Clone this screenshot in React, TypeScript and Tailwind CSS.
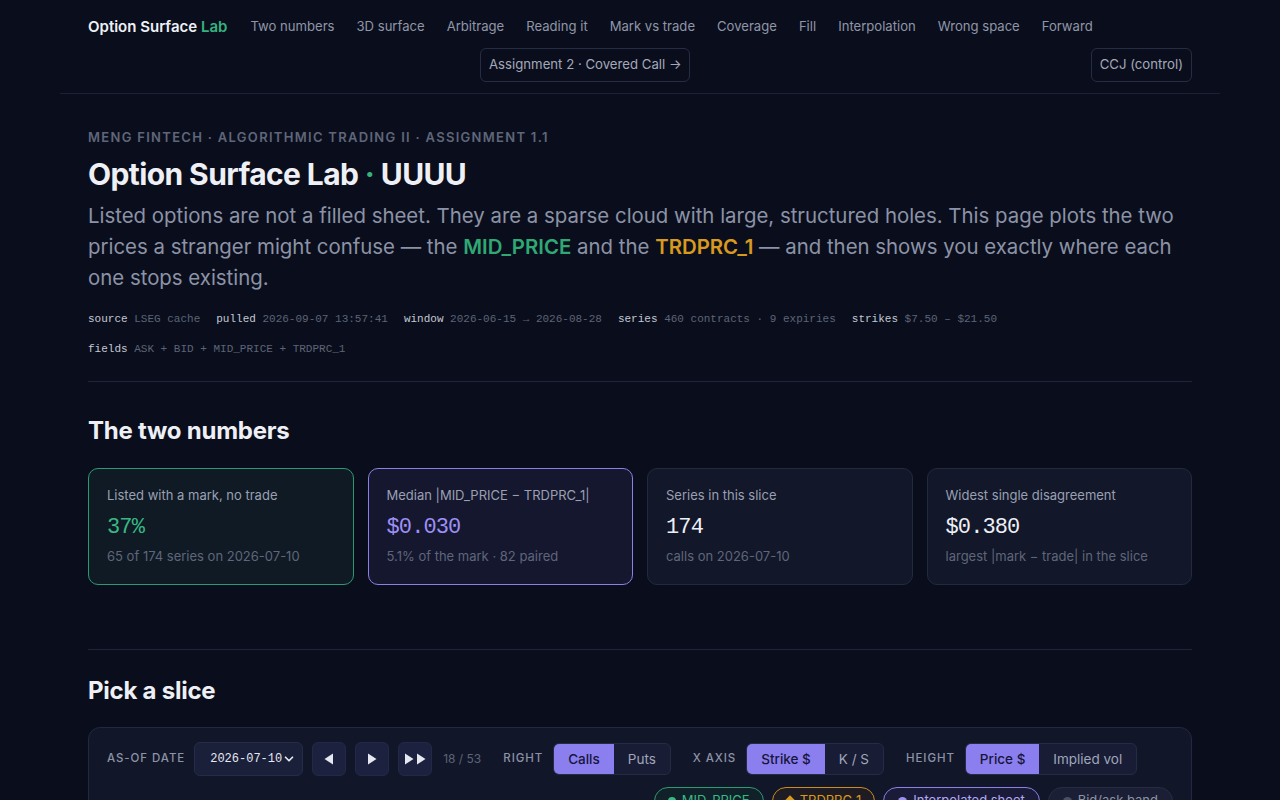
import { ChevronDown } from 'lucide-react'

const nav = [
  'Two numbers',
  '3D surface',
  'Arbitrage',
  'Reading it',
  'Mark vs trade',
  'Coverage',
  'Fill',
  'Interpolation',
  'Wrong space',
  'Forward',
]

const meta: [string, string][] = [
  ['source', 'LSEG cache'],
  ['pulled', '2026-09-07 13:57:41'],
  ['window', '2026-06-15 → 2026-08-28'],
  ['series', '460 contracts · 9 expiries'],
  ['strikes', '$7.50 – $21.50'],
]

const mono = { fontFamily: '"Liberation Mono", "DejaVu Sans Mono", monospace' }

function Header() {
  return (
    <header className="border-b border-[#1c2236] px-7 pt-[16px] pb-[11px]">
      <div className="flex items-center gap-[23px] whitespace-nowrap">
        <a className="text-[15px] font-semibold text-[#eef0f6]">
          Option Surface <span className="text-[#34b37f]">Lab</span>
        </a>
        <nav className="flex items-center gap-[22px] text-[13.1px] text-[#8f96a8]">
          {nav.map((n) => (
            <a key={n}>{n}</a>
          ))}
        </nav>
      </div>
      <div className="mt-[9px] flex items-center whitespace-nowrap">
        <a className="ml-[392px] flex h-[34px] items-center rounded-md border border-[#262c42] px-2 text-[13.2px] text-[#a3a9ba]">
          Assignment 2 · Covered Call →
        </a>
        <a className="ml-auto flex h-[34px] items-center rounded-md border border-[#262c42] px-2 text-[13.2px] text-[#a3a9ba]">
          CCJ (control)
        </a>
      </div>
    </header>
  )
}

function Card({
  label,
  value,
  sub,
  tone,
}: {
  label: React.ReactNode
  value: string
  sub: React.ReactNode
  tone: 'green' | 'purple' | 'plain'
}) {
  const box =
    tone === 'green'
      ? 'border-[#2c9a71] bg-[#0f1a25]'
      : tone === 'purple'
        ? 'border-[#8a80e6] bg-[#15172f]'
        : 'border-[#232a3e] bg-[#121729]'
  const val =
    tone === 'green' ? 'text-[#38b883]' : tone === 'purple' ? 'text-[#9d90f5]' : 'text-[#eef0f6]'
  return (
    <div className={`h-[117px] rounded-[10px] border px-[18px] pt-[17px] ${box}`}>
      <div className="text-[13px] leading-[18px] text-[#9aa0b2]">{label}</div>
      <div className={`mt-[10px] text-[22px] leading-[28px] tracking-[-0.04em] ${val}`} style={mono}>
        {value}
      </div>
      <div className="mt-[5px] text-[13px] leading-[18px] text-[#5f667a]">{sub}</div>
    </div>
  )
}

function Seg({ items }: { items: string[] }) {
  return (
    <div className="flex h-[32px] shrink-0 overflow-hidden rounded-md border border-[#252b44] bg-[#181d35] text-[13.5px] whitespace-nowrap">
      {items.map((it, i) => (
        <button
          key={it}
          className={
            i === 0
              ? 'bg-[#8b7ff0] px-[14px] font-medium text-[#17153a]'
              : 'px-[14px] text-[#a0a6ba]'
          }
        >
          {it}
        </button>
      ))}
    </div>
  )
}

function Label({ children }: { children: string }) {
  return (
    <span className="shrink-0 text-[11.5px] font-medium tracking-[0.08em] whitespace-nowrap text-[#8c93a6] uppercase">
      {children}
    </span>
  )
}

function StepBtn({ children }: { children: React.ReactNode }) {
  return (
    <button className="flex h-[34px] w-[34px] shrink-0 items-center justify-center rounded-md border border-[#232944] bg-[#1c2140] text-[#e6e8f0]">
      {children}
    </button>
  )
}

function Tri({ dir }: { dir: 'l' | 'r' }) {
  return (
    <svg width="10" height="12" viewBox="0 0 10 12">
      {dir === 'r' ? (
        <path d="M1 0.5 L9.5 6 L1 11.5 Z" fill="currentColor" />
      ) : (
        <path d="M9 0.5 L0.5 6 L9 11.5 Z" fill="currentColor" />
      )}
    </svg>
  )
}

export default function App() {
  return (
    <div className="min-h-screen bg-[#0a0e1c]" style={{ fontFamily: 'Inter, "Noto Sans", sans-serif' }}>
      <div className="mx-auto w-[1160px]">
        <Header />
        <main className="px-7">
          <section className="border-b border-[#1f2538] pt-[34px] pb-[17px]">
            <p className="text-[13px] font-semibold tracking-[0.1em] text-[#5f667a] uppercase">
              MEng Fintech · Algorithmic Trading II · Assignment 1.1
            </p>
            <h1 className="mt-[8px] text-[30px] leading-[38px] font-bold tracking-[-0.02em] text-[#eef0f6]">
              Option Surface Lab <span className="text-[#34b37f]">·</span> UUUU
            </h1>
            <p className="mt-[7px] text-[20.4px] leading-[31px] text-[#8c93a6]">
              Listed options are not a filled sheet. They are a sparse cloud with large, structured holes. This page
              plots the two prices a stranger might confuse — the{' '}
              <span className="font-semibold text-[#2fa874]">MID_PRICE</span> and the{' '}
              <span className="font-semibold text-[#d89a1e]">TRDPRC_1</span> — and then shows you exactly where each
              one stops existing.
            </p>
            <div className="mt-[11px] flex gap-[16px] text-[11px] leading-[30px] whitespace-nowrap" style={mono}>
              {meta.map(([k, v]) => (
                <span key={k}>
                  <span className="text-[#c4c8d4]">{k}</span> <span className="text-[#5d6477]">{v}</span>
                </span>
              ))}
            </div>
            <div className="text-[11px] leading-[30px]" style={mono}>
              <span className="text-[#c4c8d4]">fields</span>{' '}
              <span className="text-[#5d6477]">ASK + BID + MID_PRICE + TRDPRC_1</span>
            </div>
          </section>

          <section className="border-b border-[#1f2538] pt-[34px] pb-[64px]">
            <h2 className="text-[24px] leading-[30px] font-bold tracking-[-0.01em] text-[#eef0f6]">The two numbers</h2>
            <div className="mt-[22px] grid grid-cols-4 gap-[14px]">
              <Card tone="green" label="Listed with a mark, no trade" value="37%" sub="65 of 174 series on 2026-07-10" />
              <Card
                tone="purple"
                label="Median |MID_PRICE − TRDPRC_1|"
                value="$0.030"
                sub="5.1% of the mark · 82 paired"
              />
              <Card tone="plain" label="Series in this slice" value="174" sub="calls on 2026-07-10" />
              <Card
                tone="plain"
                label="Widest single disagreement"
                value="$0.380"
                sub="largest |mark − trade| in the slice"
              />
            </div>
          </section>

          <section className="pt-[26px]">
            <h2 className="text-[24px] leading-[30px] font-bold tracking-[-0.01em] text-[#eef0f6]">Pick a slice</h2>
            <div className="mt-[21px] rounded-xl border border-[#222840] bg-[#121629] px-[18px] pt-[14px] pb-6">
              <div className="flex items-center">
                <Label>As-of date</Label>
                <div className="ml-[9px] flex h-[34px] w-[109px] shrink-0 items-center justify-between rounded-md border border-[#262c48] bg-[#1a1f3a] pr-[6px] pl-[15px] text-[12px] text-[#e6e8f0]">
                  <span style={mono}>2026-07-10</span>
                  <ChevronDown className="h-[14px] w-[14px]" strokeWidth={3} />
                </div>
                <div className="ml-[9px] flex gap-[9px]">
                  <StepBtn>
                    <Tri dir="l" />
                  </StepBtn>
                  <StepBtn>
                    <Tri dir="r" />
                  </StepBtn>
                  <StepBtn>
                    <span className="flex gap-[2px]">
                      <Tri dir="r" />
                      <Tri dir="r" />
                    </span>
                  </StepBtn>
                </div>
                <span className="ml-[11px] shrink-0 text-[12px] whitespace-nowrap text-[#5d6477]">18 / 53</span>
                <span className="ml-[22px] flex">
                  <Label>Right</Label>
                </span>
                <span className="ml-[10px] flex">
                  <Seg items={['Calls', 'Puts']} />
                </span>
                <span className="ml-[22px] flex">
                  <Label>X axis</Label>
                </span>
                <span className="ml-[10px] flex">
                  <Seg items={['Strike $', 'K / S']} />
                </span>
                <span className="ml-[22px] flex">
                  <Label>Height</Label>
                </span>
                <span className="ml-[10px] flex">
                  <Seg items={['Price $', 'Implied vol']} />
                </span>
              </div>
              <div className="mt-[11px] flex justify-end gap-2 text-[13px] whitespace-nowrap">
                <span className="flex h-[28px] items-center gap-[6px] rounded-full border border-[#2c9a71] bg-[#10212a] px-[13px] text-[#38b883]">
                  <span className="h-[8px] w-[8px] rounded-full bg-[#38b883]" />
                  MID_PRICE
                </span>
                <span className="flex h-[28px] items-center gap-[6px] rounded-full border border-[#c98d1d] bg-[#1e1c22] px-[13px] text-[#d89a1e]">
                  <span className="h-[8px] w-[8px] rotate-45 bg-[#d89a1e]" />
                  TRDPRC_1
                </span>
                <span className="flex h-[28px] items-center gap-[6px] rounded-full border border-[#8a80e6] bg-[#1a1b38] px-[14px] text-[#b3a9f7]">
                  <span className="h-[9px] w-[9px] rounded-full bg-[#9d90f5]" />
                  Interpolated sheet
                </span>
                <span className="flex h-[28px] items-center gap-[6px] rounded-full border border-[#262c44] bg-[#1a1f35] px-[14px] text-[#8c93a6]">
                  <span className="h-[9px] w-[9px] rounded-full bg-[#4a5064]" />
                  Bid/ask band
                </span>
              </div>
            </div>
          </section>
        </main>
      </div>
    </div>
  )
}
